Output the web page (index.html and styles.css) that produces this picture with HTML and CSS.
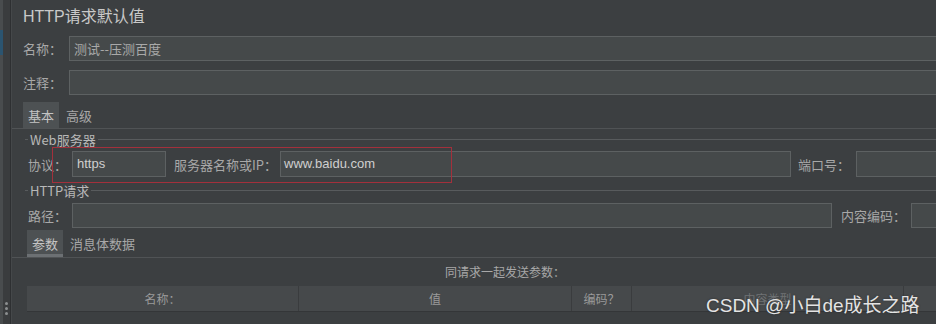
FILE: index.html
```html
<!DOCTYPE html>
<html lang="zh-CN">
<head>
    <meta charset="UTF-8">
    <meta name="viewport" content="width=device-width, initial-scale=1.0">
    <title>HTTP请求默认值</title>
    <link rel="stylesheet" href="styles.css">
</head>
<body>

<div class="app">
    <div class="rail">
        <span class="rail-mark"></span>
        <span class="grip"><i></i><i></i><i></i></span>
    </div>

    <div class="panel">
        <div class="title">HTTP请求默认值</div>

        <div class="row row-top">
            <label class="lbl lbl-name">名称：</label>
            <div class="field field-fill">测试--压测百度</div>
        </div>

        <div class="row row-top row-comment">
            <label class="lbl lbl-name">注释：</label>
            <div class="field field-fill"></div>
        </div>

        <div class="tabs tabs-main">
            <span class="tab active">基本</span>
            <span class="tab">高级</span>
        </div>

        <div class="legend legend-web">
            <span class="tick"></span>
            <span class="legend-text">Web服务器</span>
            <span class="legend-line"></span>
        </div>

        <div class="row row-server">
            <label class="lbl lbl-short">协议：</label>
            <div class="field field-proto">https</div>
            <label class="lbl lbl-host">服务器名称或IP：</label>
            <div class="field field-host">www.baidu.com</div>
            <label class="lbl lbl-port">端口号：</label>
            <div class="field field-fill"></div>
            <div class="highlight"></div>
        </div>

        <div class="legend legend-http">
            <span class="tick"></span>
            <span class="legend-text">HTTP请求</span>
            <span class="legend-line"></span>
        </div>

        <div class="row row-path">
            <label class="lbl lbl-short">路径：</label>
            <div class="field field-path"></div>
            <label class="lbl lbl-enc">内容编码：</label>
            <div class="field field-fill"></div>
        </div>

        <div class="tabs tabs-params">
            <span class="tab active">参数</span>
            <span class="tab">消息体数据</span>
        </div>

        <div class="caption">同请求一起发送参数：</div>

        <div class="table-head">
            <div class="col">名称：</div>
            <div class="col">值</div>
            <div class="col">编码？</div>
            <div class="col col-dim">内容类型</div>
            <div class="col col-dim">包含等号？</div>
        </div>
    </div>

    <div class="watermark">CSDN @小白de成长之路</div>
</div>

</body>
</html>
```

FILE: styles.css
```css
body {
    margin: 0;
    background-color: #3c3f41;
    font-family: "Noto Sans CJK SC", "Liberation Sans", sans-serif;
    color: #a8a8a8;
    font-size: 13px;
    overflow: hidden;
}

.app {
    position: relative;
    display: flex;
    width: 936px;
    height: 324px;
    overflow: hidden;
}

/* left splitter strip */
.rail {
    position: relative;
    width: 10px;
    flex: none;
    border-right: 1px solid #2e3032;
    background: linear-gradient(to right, #494c4e 0, #494c4e 3px, #3a3c3e 3px);
}

.rail-mark {
    position: absolute;
    left: 0;
    top: 30px;
    width: 3px;
    height: 25px;
    background-color: #2b5470;
}

.grip {
    position: absolute;
    left: 5px;
    top: 302px;
    display: flex;
    flex-direction: column;
    gap: 2px;
}

.grip i {
    width: 3px;
    height: 3px;
    border-radius: 50%;
    background-color: #8c8f91;
}

.panel {
    flex: 1;
    min-width: 0;
    border-left: 1px solid #45484a;
}

.title {
    height: 36px;
    line-height: 34px;
    padding-left: 11px;
    font-size: 16px;
    color: #c9c9c9;
    font-family: "Liberation Sans", "Noto Sans CJK SC", sans-serif;
}

.row {
    display: flex;
    align-items: center;
}

.row-top {
    height: 25px;
    padding-left: 11px;
}

.row-comment {
    margin-top: 9px;
}

.lbl {
    flex: none;
    white-space: nowrap;
}

.lbl-name { width: 46px; }
.lbl-short { width: 44px; }
.lbl-host { width: 106px; margin-left: 8px; }
.lbl-port { width: 58px; margin-left: 7px; }
.lbl-enc { width: 70px; margin-left: 9px; }

.field {
    box-sizing: border-box;
    height: 100%;
    background-color: #45494a;
    border: 1px solid #5d6162;
    padding-left: 4px;
    line-height: 23px;
    color: #cfcfcf;
    white-space: nowrap;
    overflow: hidden;
}

.field-fill {
    flex: 1;
    min-width: 0;
    margin-right: -1px;
}

.row-top .field {
    color: #a9a9a9;
}

.field-proto {
    width: 94px;
    font-family: "Liberation Sans", sans-serif;
}

.field-host {
    width: 511px;
    padding-left: 3px;
    font-family: "Liberation Sans", sans-serif;
}

.field-path {
    width: 760px;
}

.tabs {
    display: flex;
    align-items: stretch;
    border-bottom: 1px solid #505355;
}

.tabs-main {
    height: 26px;
    margin-top: 7px;
    padding-left: 11px;
}

.tabs-params {
    height: 27px;
    margin-top: 2px;
    padding-left: 15px;
}

.tab {
    display: flex;
    align-items: center;
    padding: 0 6px 0 7px;
    color: #a8a8a8;
}

.tab.active {
    background-color: #4d5153;
    color: #c4c4c4;
    padding: 0 5px;
}

.tabs-params .tab.active {
    box-shadow: inset 0 -3px 0 #6c7073;
}

.legend {
    display: flex;
    align-items: center;
    padding-left: 13px;
}

.legend-web {
    height: 20px;
    margin-bottom: 2px;
}

.legend-http {
    height: 26px;
}

.tick {
    width: 3px;
    height: 1px;
    background-color: #585b5d;
}

.legend-text {
    padding: 0 2px 0 2px;
    color: #b8b8b8;
    font-size: 13px;
}

.legend-line {
    flex: 1;
    height: 1px;
    background-color: #585b5d;
}

.row-server {
    position: relative;
    height: 26px;
    padding-left: 16px;
}

.row-path {
    height: 25px;
    padding-left: 16px;
}

.highlight {
    position: absolute;
    left: 40px;
    top: -4px;
    width: 400px;
    height: 36px;
    box-sizing: border-box;
    border: 1px solid #a3303c;
}

.caption {
    height: 28px;
    line-height: 28px;
    padding-left: 433px;
    font-size: 12px;
    color: #a8a8a8;
}

.table-head {
    display: grid;
    grid-template-columns: 271px 273px 60px 272px 140px;
    height: 25px;
    margin-left: 15px;
    background-color: #46494b;
    border-bottom: 1px solid #343638;
}

.table-head .col {
    display: flex;
    align-items: center;
    justify-content: center;
    border-left: 1px solid #3a3c3e;
    font-size: 12px;
    color: #9a9a9a;
    white-space: nowrap;
}

.table-head .col:first-child {
    border-left: none;
}

.table-head .col-dim {
    color: #6f7274;
}

.watermark {
    position: absolute;
    left: 706px;
    top: 290px;
    font-size: 19px;
    color: #e4e4e4;
    white-space: nowrap;
    text-shadow: 0 0 2px #2a2a2a;
    font-family: "Liberation Sans", "Noto Sans CJK SC", sans-serif;
}
```
